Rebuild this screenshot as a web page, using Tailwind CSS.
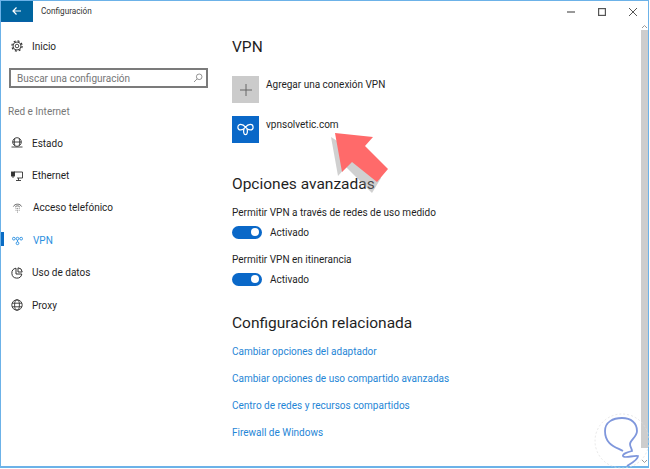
<!DOCTYPE html>
<html lang="es">
<head>
  <meta charset="UTF-8" />
  <title>Configuración</title>
  <script src="https://cdn.jsdelivr.net/npm/@tailwindcss/browser@4"></script>
</head>
<body class="bg-white text-[#1f1f1f] font-['Roboto','Noto_Sans',sans-serif]">
  <div class="relative w-[650px] h-[469px] overflow-hidden bg-white">
    <!-- Window -->
    <div class="flex flex-col h-[468px] w-[649px] border border-[#6cb2e8] border-b-2">
      <!-- Title bar -->
      <div class="flex items-center h-[21px] shrink-0">
        <div class="flex items-center justify-center w-8 h-[21px] bg-[#00659f] border-b border-[#0a5fa8]">
          <svg width="10" height="10" viewBox="0 0 10 10" fill="none" stroke="white" stroke-width="1.2"><path d="M9 5H1M4.5 1.5 1 5l3.500 3.500"/></svg>
        </div>
        <span class="ml-[8px] text-[8.2px] text-[#333]">Configuración</span>
        <div class="ml-auto flex items-center gap-[23px] mr-[11px]">
          <svg width="8" height="8" viewBox="0 0 8 8" stroke="#555" stroke-width="1.200"><path d="M0 4h8"/></svg>
          <svg width="8" height="8" viewBox="0 0 8 8" fill="none" stroke="#555" stroke-width="1.200"><rect x=".6" y=".6" width="6.800" height="6.800"/></svg>
          <svg width="8" height="8" viewBox="0 0 8 8" stroke="#555" stroke-width="1"><path d="M0 0l8 8M8 0 0 8"/></svg>
        </div>
      </div>

      <div class="flex flex-1 min-h-0">
        <!-- Sidebar -->
        <aside class="w-[219px] shrink-0 text-[10px]">
          <div class="flex items-center h-[16px] mt-[16px] pl-[10px] gap-[9px]">
            <svg class="w-[12px] h-[12px]" viewBox="0 0 12 12" fill="none" stroke="#333"><circle cx="6" cy="6" r="1.800" stroke-width=".9"/><circle cx="6" cy="6" r="4" stroke-width=".9"/><circle cx="6" cy="6" r="5.100" stroke-width="1.200" stroke-dasharray="2 2"/></svg>
            <span>Inicio</span>
          </div>
          <div class="flex items-center justify-between mt-[14px] ml-[8px] w-[199px] h-[20px] border-2 border-[#7b7b7b] pl-[6px] pr-[3px]">
            <span class="text-[#767676]">Buscar una configuración</span>
            <svg width="10" height="10" viewBox="0 0 10 10" fill="none" stroke="#888" stroke-width=".9"><circle cx="6.200" cy="3.800" r="2.800"/><path d="M4.200 5.800 1 9"/></svg>
          </div>
          <div class="mt-[16px] ml-[7px] text-[#777] leading-[16px]">Red e Internet</div>
          <nav class="mt-[7px]">
            <div class="flex items-center h-[32.4px] pl-[10px] gap-[9px]">
              <svg class="w-[12px] h-[12px]" viewBox="0 0 12 12" fill="none" stroke="#333" stroke-width=".9"><circle cx="6" cy="5" r="4.300"/><path d="M1.700 5h8.600M4 1.500C3 3.500 3 6.500 4 8.500M8 1.500c1 2 1 5 0 7M.5 10h11"/></svg>
              <span>Estado</span>
            </div>
            <div class="flex items-center h-[32.4px] pl-[10px] gap-[9px]">
              <svg class="w-[12px] h-[12px]" viewBox="0 0 12 12" fill="none" stroke="#333" stroke-width=".9"><path d="M3 2h8.500v6H6M5 10.500h5M7.500 8v2.500"/><rect x=".5" y="2" width="3" height="4" fill="#333"/><path d="M2 6v2"/></svg>
              <span>Ethernet</span>
            </div>
            <div class="flex items-center h-[32.4px] pl-[11px] gap-[10px]">
              <svg class="w-[11px] h-[11px]" viewBox="0 0 12 12" fill="none" stroke="#333" stroke-width=".8"><path d="M1.500 5C3 1.500 9 1.500 10.500 5"/><path d="M3.500 5.500C4.500 3.800 7.500 3.800 8.500 5.500"/><path d="M4 7h.8M5.700 7h.8M7.400 7h.8M4 9h.8M5.700 9h.8M7.400 9h.8M5.700 11h.8"/></svg>
              <span>Acceso telefónico</span>
            </div>
            <div class="relative flex items-center h-[32.4px] pl-[11px] gap-[10px] text-[#2b8fe0]">
              <div class="absolute left-0 top-[8px] w-[3px] h-[14px] bg-[#0a6cc4]"></div>
              <svg class="w-[11px] h-[11px]" viewBox="0 0 12 12" fill="none" stroke="#2b8fe0" stroke-width="1"><circle cx="2" cy="4" r="1.500"/><circle cx="10" cy="4" r="1.500"/><circle cx="6" cy="4" r="1.500"/><circle cx="6" cy="9" r="1.500"/><path d="M6 5.500v2"/></svg>
              <span>VPN</span>
            </div>
            <div class="flex items-center h-[32.4px] pl-[10px] gap-[9px]">
              <svg class="w-[12px] h-[12px]" viewBox="0 0 12 12" fill="none" stroke="#333" stroke-width="1"><path d="M5 1.200A5 5 0 1 0 10.800 7H5z"/><path d="M7 .8A4.500 4.500 0 0 1 11.200 5H7z"/></svg>
              <span>Uso de datos</span>
            </div>
            <div class="flex items-center h-[32.4px] pl-[10px] gap-[9px]">
              <svg class="w-[12px] h-[12px]" viewBox="0 0 12 12" fill="none" stroke="#333" stroke-width=".9"><circle cx="6" cy="6" r="5.200"/><ellipse cx="6" cy="6" rx="2.400" ry="5.200"/><path d="M1 4.200h10M1 7.800h10"/></svg>
              <span>Proxy</span>
            </div>
          </nav>
        </aside>

        <!-- Main content -->
        <main class="flex-1 ml-[12px] text-[10px]">
          <h1 class="mt-[14px] text-[15.5px] leading-[22px] font-normal">VPN</h1>
          <div class="flex gap-[7px] mt-[18px]">
            <div class="flex items-center justify-center w-[27px] h-[27px] bg-[#cbcbcb]">
              <svg width="12" height="12" viewBox="0 0 12 12" stroke="#666" stroke-width="1"><path d="M6 0v12M0 6h12"/></svg>
            </div>
            <span class="leading-[18px]">Agregar una conexión VPN</span>
          </div>
          <div class="flex gap-[7px] mt-[13px]">
            <div class="flex items-center justify-center w-[27px] h-[27px] bg-[#0a68c8]">
              <svg width="19" height="15" viewBox="0 0 20 15" fill="none" stroke="white" stroke-width="1.300"><path d="M10 5C8.500 3 7 2 5 2A3 3 0 0 0 5 8C7 8 8.500 7 10 5 11.500 3 13 2 15 2A3 3 0 0 1 15 8C13 8 11.500 7 10 5"/><path d="M11.500 7C12.500 9 12 13 10 13 8 13 7.500 9 8.500 7"/></svg>
            </div>
            <span class="leading-[18px]">vpnsolvetic.com</span>
          </div>
          <h2 class="mt-[30px] text-[15.5px] leading-[22px] font-normal">Opciones avanzadas</h2>
          <div class="mt-[10px] leading-[16px]">Permitir VPN a través de redes de uso medido</div>
          <div class="flex items-center gap-[8px] mt-[4px] h-[14px]">
            <div class="flex items-center justify-end w-[30px] h-[13px] rounded-full bg-[#0a68c8] pr-[3px]"><div class="w-[8px] h-[8px] rounded-full bg-white"></div></div>
            <span>Activado</span>
          </div>
          <div class="mt-[13px] leading-[16px]">Permitir VPN en itinerancia</div>
          <div class="flex items-center gap-[8px] mt-[4px] h-[14px]">
            <div class="flex items-center justify-end w-[30px] h-[13px] rounded-full bg-[#0a68c8] pr-[3px]"><div class="w-[8px] h-[8px] rounded-full bg-white"></div></div>
            <span>Activado</span>
          </div>
          <h2 class="mt-[26px] text-[15.5px] leading-[22px] font-normal">Configuración relacionada</h2>
          <div class="flex flex-col mt-[10px] text-[#1f86d6]">
            <a class="h-[27px] leading-[16px]">Cambiar opciones del adaptador</a>
            <a class="h-[27px] leading-[16px]">Cambiar opciones de uso compartido avanzadas</a>
            <a class="h-[27px] leading-[16px]">Centro de redes y recursos compartidos</a>
            <a class="h-[27px] leading-[16px]">Firewall de Windows</a>
          </div>
        </main>

        <!-- Scrollbar -->
        <div class="flex flex-col items-center w-[7px] shrink-0">
          <svg class="mt-[2px]" width="7" height="5" viewBox="0 0 7 5" fill="none" stroke="#999"><path d="M1 4l2.500-2.500L6 4"/></svg>
          <div class="w-[7px] flex-1 bg-[#cdcdcd] mt-[1px] mb-[11px]"></div>
          <svg class="mb-[2px]" width="7" height="5" viewBox="0 0 7 5" fill="none" stroke="#999"><path d="M1 1l2.500 2.500L6 1"/></svg>
        </div>
      </div>
    </div>

    <!-- Red arrow annotation -->
    <svg class="absolute left-0 top-0 pointer-events-none" width="650" height="469" viewBox="0 0 650 469">
      <path d="M331 137 338 176 346 167 372 193 381 178 356 153Z" fill="#8a8a8a" fill-opacity=".4"/>
      <path d="M335 133 373 137 365 146 388 169 377 182 352 162 342 172Z" fill="#ff6a6a"/>
    </svg>

    <!-- Corner watermark -->
    <svg class="absolute left-[592px] top-[413px] pointer-events-none" width="58" height="56" viewBox="0 0 58 56" fill="none">
      <circle cx="30" cy="28" r="27" stroke="#ddd" stroke-width=".7" stroke-dasharray="2 2"/>
      <path d="M31 38C24 34 13 32 13 18 13 9 21 5 30 5 39 5 45 10 45 18 45 24 38 27 38 31 38 34 40 36 40 38 36 39 30 41 31 43 32 46 42 42 46 43 46 47 38 51 35 53" stroke="#7f97dc" stroke-width="1.800"/>
    </svg>
  </div>
</body>
</html>
